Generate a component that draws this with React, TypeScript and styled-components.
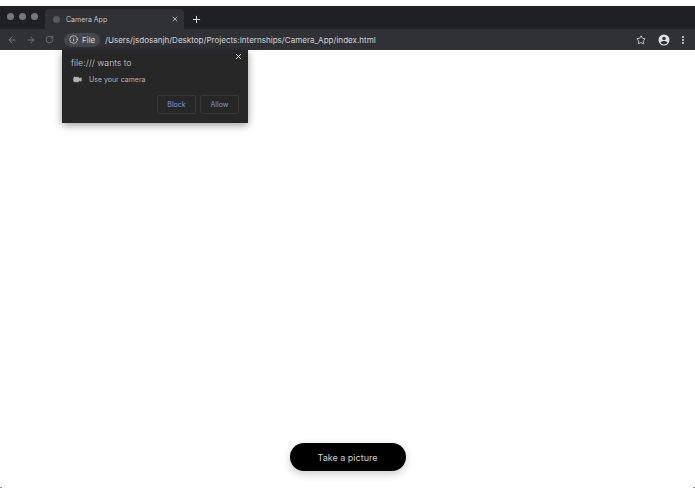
import styled, { createGlobalStyle } from 'styled-components'
import { ArrowLeft, ArrowRight, RotateCw, Info, Star, MoreVertical, X, Plus, Video } from 'lucide-react'

const Global = createGlobalStyle`
    html, body { margin: 0; padding: 0; background: #fff; }
    body { font-family: "Inter", "Liberation Sans", sans-serif; }
    #root { width: 695px; height: 494px; overflow: hidden; }
`
const Page = styled.div`
    position: relative;
    width: 695px;
    height: 494px;
    padding-top: 6px;
    box-sizing: border-box;
    background: #fff;
    overflow: hidden;
`
const TabStrip = styled.div`
    height: 23px;
    background: #1f2023;
    display: flex;
    align-items: flex-end;
`
const Lights = styled.div`
    display: flex;
    gap: 5px;
    padding: 0 0 9px 7px;
    width: 38px;
`
const Light = styled.span`
    width: 7px;
    height: 7px;
    border-radius: 50%;
    background: #77787b;
`
const Tab = styled.div`
    width: 139px;
    height: 20px;
    margin-right: 7px;
    background: #2f3134;
    border-radius: 4px 4px 0 0;
    display: flex;
    align-items: center;
    padding: 0 5px 0 8px;
    box-sizing: border-box;
    color: #c4c6c9;
    font-size: 7px;
`
const Favicon = styled.span`
    width: 7px;
    height: 7px;
    border-radius: 50%;
    background: #56595c;
    margin-right: 6px;
`
const TabTitle = styled.span`
    flex: 1;
`
const NewTab = styled.span`
    display: flex;
    margin-bottom: 4px;
    color: #e4e6e9;
`
const Toolbar = styled.div`
    height: 21px;
    background: #2f3134;
    display: flex;
    align-items: center;
    padding: 0 7px 0 7px;
    color: #7b7e82;
`
const NavIcons = styled.div`
    display: flex;
    gap: 9px;
    width: 57px;
`
const Chip = styled.div`
    height: 14px;
    width: 36px;
    border-radius: 7px;
    background: #44474b;
    display: flex;
    align-items: center;
    gap: 4px;
    padding-left: 5px;
    box-sizing: border-box;
    color: #d5d7da;
    font-size: 8px;
`
const Url = styled.div`
    flex: 1;
    margin-left: 5px;
    color: #d0d2d5;
    font-size: 8.06px;
    white-space: nowrap;
`
const RightIcons = styled.div`
    display: flex;
    align-items: center;
    gap: 8px;
    color: #dfe1e4;
`
const Avatar = styled.svg`
    width: 12px;
    height: 12px;
    display: block;
    margin-left: 4px;
`
const Prompt = styled.div`
    position: absolute;
    left: 62px;
    top: 50px;
    width: 186px;
    height: 73px;
    padding: 9px 9px 9px 9px;
    box-sizing: border-box;
    background: #272727;
    box-shadow: 0 2px 8px rgba(0, 0, 0, 0.4);
    color: #cfcfcf;
`
const Close = styled.div`
    position: absolute;
    right: 5px;
    top: 2px;
    color: #e6e6e6;
    display: flex;
`
const PromptTitle = styled.div`
    font-size: 8.75px;
    line-height: 9px;
    font-weight: 300;
`
const Permission = styled.div`
    display: flex;
    align-items: center;
    gap: 7px;
    margin-top: 7px;
    padding-left: 2px;
    font-size: 7px;
    color: #b4b4b4;
`
const Actions = styled.div`
    display: flex;
    justify-content: flex-end;
    gap: 4px;
    margin-top: 11px;
`
const Action = styled.button`
    width: 39px;
    height: 19px;
    padding: 0;
    background: transparent;
    border: 1px solid #383838;
    border-radius: 2px;
    color: #7f9ad6;
    font-family: inherit;
    font-size: 7px;
`
const Footer = styled.div`
    position: absolute;
    left: 0;
    right: 0;
    top: 443px;
    display: flex;
    justify-content: center;
`
const Shutter = styled.button`
    width: 116px;
    height: 28px;
    border: 0;
    border-radius: 14px;
    background: #000;
    color: #d0d0d0;
    font-family: inherit;
    font-size: 9px;
    box-shadow: 0 3px 8px rgba(0, 0, 0, 0.2);
`
const CornerDot = styled.span<{ side: 'left' | 'right' }>`
    position: absolute;
    top: 487px;
    ${props => props.side}: 0;
    width: 2px;
    height: 1px;
    background: #8a8a8a;
`

export default function App() {
    return (
        <Page>
            <Global />
            <TabStrip>
                <Lights>
                    <Light />
                    <Light />
                    <Light />
                </Lights>
                <Tab>
                    <Favicon />
                    <TabTitle>Camera App</TabTitle>
                    <X size={8} strokeWidth={2.5} />
                </Tab>
                <NewTab>
                    <Plus size={11} strokeWidth={2} />
                </NewTab>
            </TabStrip>
            <Toolbar>
                <NavIcons>
                    <ArrowLeft size={10} />
                    <ArrowRight size={10} />
                    <RotateCw size={9} />
                </NavIcons>
                <Chip>
                    <Info size={9} />
                    File
                </Chip>
                <Url>/Users/jsdosanjh/Desktop/Projects:Internships/Camera_App/index.html</Url>
                <RightIcons>
                    <Star size={10} />
                    <Avatar viewBox="0 0 24 24">
                        <path
                            fill="currentColor"
                            d="M12 1a11 11 0 1 0 0 22 11 11 0 0 0 0-22zm0 4.500a3.600 3.600 0 1 1 0 7.200 3.600 3.600 0 0 1 0-7.200zM12 21c-3 0-5.600-1.500-7.100-3.800 1-1.900 4.600-3 7.100-3s6.100 1.100 7.100 3C17.600 19.500 15 21 12 21z"
                        />
                    </Avatar>
                    <MoreVertical size={10} strokeWidth={3} />
                </RightIcons>
            </Toolbar>
            <Prompt>
                <Close>
                    <X size={9} strokeWidth={2.5} />
                </Close>
                <PromptTitle>file:/// wants to</PromptTitle>
                <Permission>
                    <Video size={9} fill="currentColor" />
                    Use your camera
                </Permission>
                <Actions>
                    <Action>Block</Action>
                    <Action>Allow</Action>
                </Actions>
            </Prompt>
            <Footer>
                <Shutter>Take a picture</Shutter>
            </Footer>
            <CornerDot side="left" />
            <CornerDot side="right" />
        </Page>
    )
}
